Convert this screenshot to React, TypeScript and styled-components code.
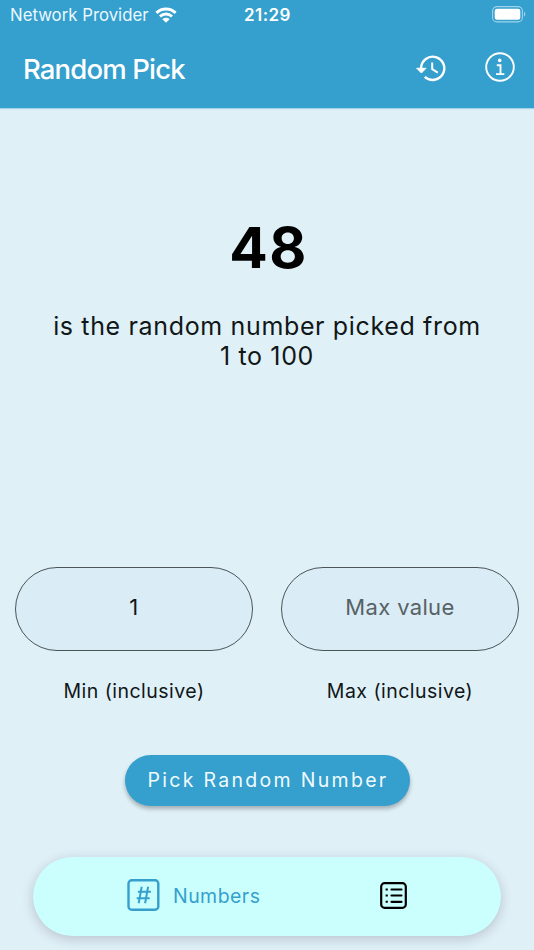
import React from "react";
import styled, { createGlobalStyle } from "styled-components";

const GlobalStyle = createGlobalStyle`
  * { box-sizing: border-box; }
  body { margin: 0; background: #dff0f7; font-family: Inter, "Open Sans", sans-serif; }
  svg { display: block; }
`;

const Screen = styled.main`
  width: 534px;
  height: 950px;
  display: flex;
  flex-direction: column;
  overflow: hidden;
  background: #dff0f7;
  color: #111617;
`;

const Header = styled.header`
  height: 108px;
  flex: none;
  background: #359fcd;
  color: #fff;
  box-shadow: 0 1px 1px rgba(53, 159, 205, 0.35);
`;

const StatusBar = styled.div`
  height: 30px;
  display: grid;
  grid-template-columns: 1fr auto 1fr;
  align-items: center;
  padding: 0 9px 0 10px;
  line-height: 30px;
`;

const Carrier = styled.div`
  display: flex;
  align-items: center;
  gap: 6px;
  font-size: 16.8px;
  letter-spacing: 0;
  white-space: nowrap;
  color: #eaf8ff;
`;

const Clock = styled.div`
  font-size: 17px;
  font-weight: 600;
  letter-spacing: 0.45px;
`;

const BatterySlot = styled.div`
  display: flex;
  justify-content: flex-end;
  padding-bottom: 2px;
  margin-right: -1px;
`;

const AppBar = styled.div`
  height: 78px;
  display: flex;
  align-items: center;
  padding: 0 18px 0 23px;
`;

const Title = styled.h1`
  margin: 0;
  flex: 1;
  font-size: 27.5px;
  font-weight: 500;
  line-height: 78px;
  letter-spacing: -0.85px;
`;

const Actions = styled.div`
  display: flex;
  gap: 37px;
  padding-bottom: 4px;
`;

const IconButton = styled.button`
  padding: 0;
  border: 0;
  background: none;
  color: inherit;
`;

const Result = styled.section`
  height: 459px;
  flex: none;
  padding-top: 105px;
  text-align: center;
`;

const Picked = styled.div`
  padding-left: 3px;
  font-size: 57px;
  line-height: 70px;
  font-weight: 700;
  letter-spacing: 1.5px;
  color: #000;
`;

const Description = styled.p`
  margin: 28px 0 0;
  font-size: 25px;
  line-height: 30px;
  letter-spacing: 0.65px;
`;

const Fields = styled.section`
  display: grid;
  grid-template-columns: 238px 238px;
  justify-content: center;
  column-gap: 28px;
`;

const Field = styled.label`
  display: flex;
  flex-direction: column;
  align-items: center;
  font-size: 19.5px;
  line-height: 24px;
  letter-spacing: 0.47px;
`;

const Input = styled.input`
  width: 100%;
  height: 84px;
  margin-bottom: 28px;
  padding: 0 20px 5px;
  border: 1.4px solid #4b5558;
  border-radius: 42px;
  background: #daecf6;
  color: #111617;
  font: 400 22px Inter, sans-serif;
  letter-spacing: 0.35px;
  text-align: center;
  outline: none;
  &::placeholder { color: #576265; opacity: 1; }
`;

const PickButton = styled.button`
  align-self: center;
  width: 285px;
  height: 51px;
  flex: none;
  margin-top: 52px;
  padding: 0 0 2px 2px;
  border: 0;
  border-radius: 26px;
  background: #359fcd;
  color: #f0fbff;
  font: 400 19.5px Inter, sans-serif;
  letter-spacing: 2.3px;
  box-shadow: 0 3px 4px rgba(0, 0, 0, 0.27);
`;

const NavBar = styled.nav`
  align-self: center;
  width: 468px;
  height: 79px;
  flex: none;
  margin-top: 51px;
  border-radius: 40px;
  display: flex;
  align-items: center;
  padding: 0 94px 3px;
  justify-content: space-between;
  background: #cbfffe;
  box-shadow: 0 3px 12px rgba(70, 55, 75, 0.24);
`;

const Tab = styled.a<{ $active?: boolean }>`
  display: flex;
  align-items: center;
  gap: 13px;
  line-height: 24px;
  font-size: 19.5px;
  letter-spacing: 0.45px;
  color: ${(p) => (p.$active ? "#359fcd" : "#000")};
`;

const TabLabel = styled.span`
  padding-top: 2px;
`;

const Wifi = () => (
  <svg width="22" height="16" viewBox="0 0 22 16" fill="none" stroke="#fff" strokeWidth="3">
    <path d="M1.4 5.8C6.8.7 15.2.7 20.6 5.8" />
    <path d="M5 9.5C8.4 6.3 13.6 6.3 17 9.5" />
    <path d="M11 15.8 7.4 12.2C9.5 10.3 12.5 10.3 14.6 12.2Z" fill="#fff" stroke="none" />
  </svg>
);

const Battery = () => (
  <svg width="34" height="17" viewBox="0 0 34 17">
    <rect x=".6" y=".6" width="29.8" height="15.3" rx="4.4" fill="none" stroke="#9ed4ed" strokeWidth="1.1" />
    <rect x="2.7" y="2.8" width="25.6" height="10.9" rx="2.3" fill="#fff" />
    <path d="M32 5.8C33.7 6.3 33.7 10.2 32 10.7Z" fill="#9ed4ed" />
  </svg>
);

const History = () => (
  <svg width="32" height="32" viewBox="0 0 32 32" fill="none" stroke="#fff" strokeWidth="2.4" strokeLinejoin="round">
    <path d="M6.1 17A11.6 11.6 0 1 1 9.8 25.8" />
    <path d="M1.7 17.3H11L6.4 22Z" fill="#fff" strokeWidth="1" />
    <path d="M17.2 11.5V18.2L22.8 21.6" strokeWidth="2" />
  </svg>
);

const Info = () => (
  <svg width="32" height="32" viewBox="0 0 32 32" fill="none" stroke="#fff" strokeWidth="1.9">
    <circle cx="16" cy="16" r="13.8" />
    <circle cx="15.7" cy="9.4" r="1.8" fill="#fff" stroke="none" />
    <path d="M12.8 14.2H16.5V23M12 23.1H20.3" />
  </svg>
);

const NumberIcon = () => (
  <svg width="33" height="32" viewBox="0 0 33 32" fill="none" stroke="currentColor" strokeWidth="2">
    <rect x="1.5" y="1.3" width="29.8" height="29.4" rx="3.2" strokeWidth="2.4" />
    <path d="M14.7 7.8 11.7 24.2M21.1 7.8 18.1 24.2M10.9 12.8H23.9M9.7 19.3H22.7" />
  </svg>
);

const ListIcon = () => (
  <svg width="27" height="27" viewBox="0 0 27 27" fill="none" stroke="currentColor" strokeWidth="2.2">
    <rect x="1.2" y="1.2" width="24.6" height="24.6" rx="3.4" />
    <path d="M11.5 7.5H21.5M11.5 13.5H21.5M11.5 19.8H21.5" strokeLinecap="round" />
    <path d="M5.6 7.5H7.8M5.6 13.5H7.8M5.6 19.8H7.8" strokeWidth="2" />
  </svg>
);

export default function App() {
  return (
    <>
      <GlobalStyle />
      <Screen>
        <Header>
          <StatusBar>
            <Carrier>Network Provider <Wifi /></Carrier>
            <Clock>21:29</Clock>
            <BatterySlot><Battery /></BatterySlot>
          </StatusBar>
          <AppBar>
            <Title>Random Pick</Title>
            <Actions>
              <IconButton aria-label="History"><History /></IconButton>
              <IconButton aria-label="Information"><Info /></IconButton>
            </Actions>
          </AppBar>
        </Header>
        <Result>
          <Picked>48</Picked>
          <Description>is the random number picked from<br />1 to 100</Description>
        </Result>
        <Fields>
          <Field><Input defaultValue="1" />Min (inclusive)</Field>
          <Field><Input placeholder="Max value" />Max (inclusive)</Field>
        </Fields>
        <PickButton>Pick Random Number</PickButton>
        <NavBar>
          <Tab $active><NumberIcon /><TabLabel>Numbers</TabLabel></Tab>
          <Tab aria-label="List"><ListIcon /></Tab>
        </NavBar>
      </Screen>
    </>
  );
}
